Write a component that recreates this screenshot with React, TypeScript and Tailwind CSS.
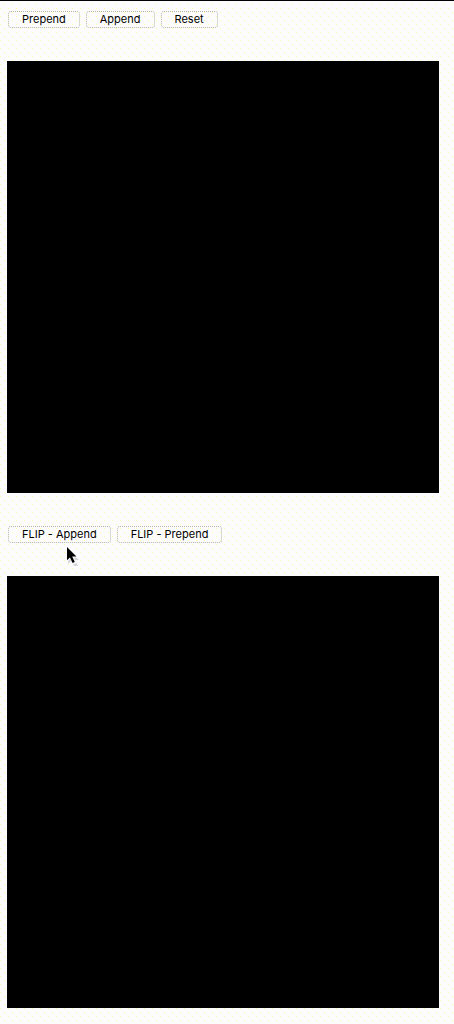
import type { ReactNode } from 'react';

function ActionButton({ children }: { children: ReactNode }) {
  return (
    <button
      type="button"
      className="h-[17px] rounded-[3px] border border-dotted border-[#b4b4a8] px-[13px] text-[11px] leading-[15px] whitespace-nowrap text-black"
    >
      {children}
    </button>
  );
}

function Pointer() {
  return (
    <svg
      aria-hidden="true"
      viewBox="0 0 14 20"
      className="pointer-events-none absolute top-[20px] left-[59px] h-5 w-3.5"
    >
      <path d="M2 3v15l3-3 3 5h4l-3-6h4z" fill="#d6d6dc" />
      <path d="M1 0v16l3.5-3.4L7 18.4l3.2-1.4-2.5-5.6h5z" fill="#fff" />
      <path d="M1 1v13.2l3-2.8 2.6 5.6 2.2-1-2.6-5.5h4.3z" fill="#000" />
    </svg>
  );
}

export default function App() {
  return (
    <main className="min-h-screen border-t border-black bg-[#fcfcff] bg-[conic-gradient(from_270deg_at_1px_1px,#ffff99_90deg,transparent_90deg),conic-gradient(from_270deg_at_1px_1px,#ffff99_90deg,transparent_90deg)] bg-[length:8px_8px] bg-[position:0px_7px,4px_3px] pt-2.5 pr-[15px] pb-4 pl-[7px] font-['Inter','Liberation_Sans',sans-serif]">
      <div className="flex gap-1.5 pl-px">
        <ActionButton>Prepend</ActionButton>
        <ActionButton>Append</ActionButton>
        <ActionButton>Reset</ActionButton>
      </div>
      <section aria-label="List" className="mt-[33px] aspect-square w-full bg-black" />
      <div className="relative mt-[33px] flex gap-1.5 pl-px">
        <ActionButton>FLIP - Append</ActionButton>
        <ActionButton>FLIP - Prepend</ActionButton>
        <Pointer />
      </div>
      <section aria-label="FLIP list" className="mt-[33px] aspect-square w-full bg-black" />
    </main>
  );
}
